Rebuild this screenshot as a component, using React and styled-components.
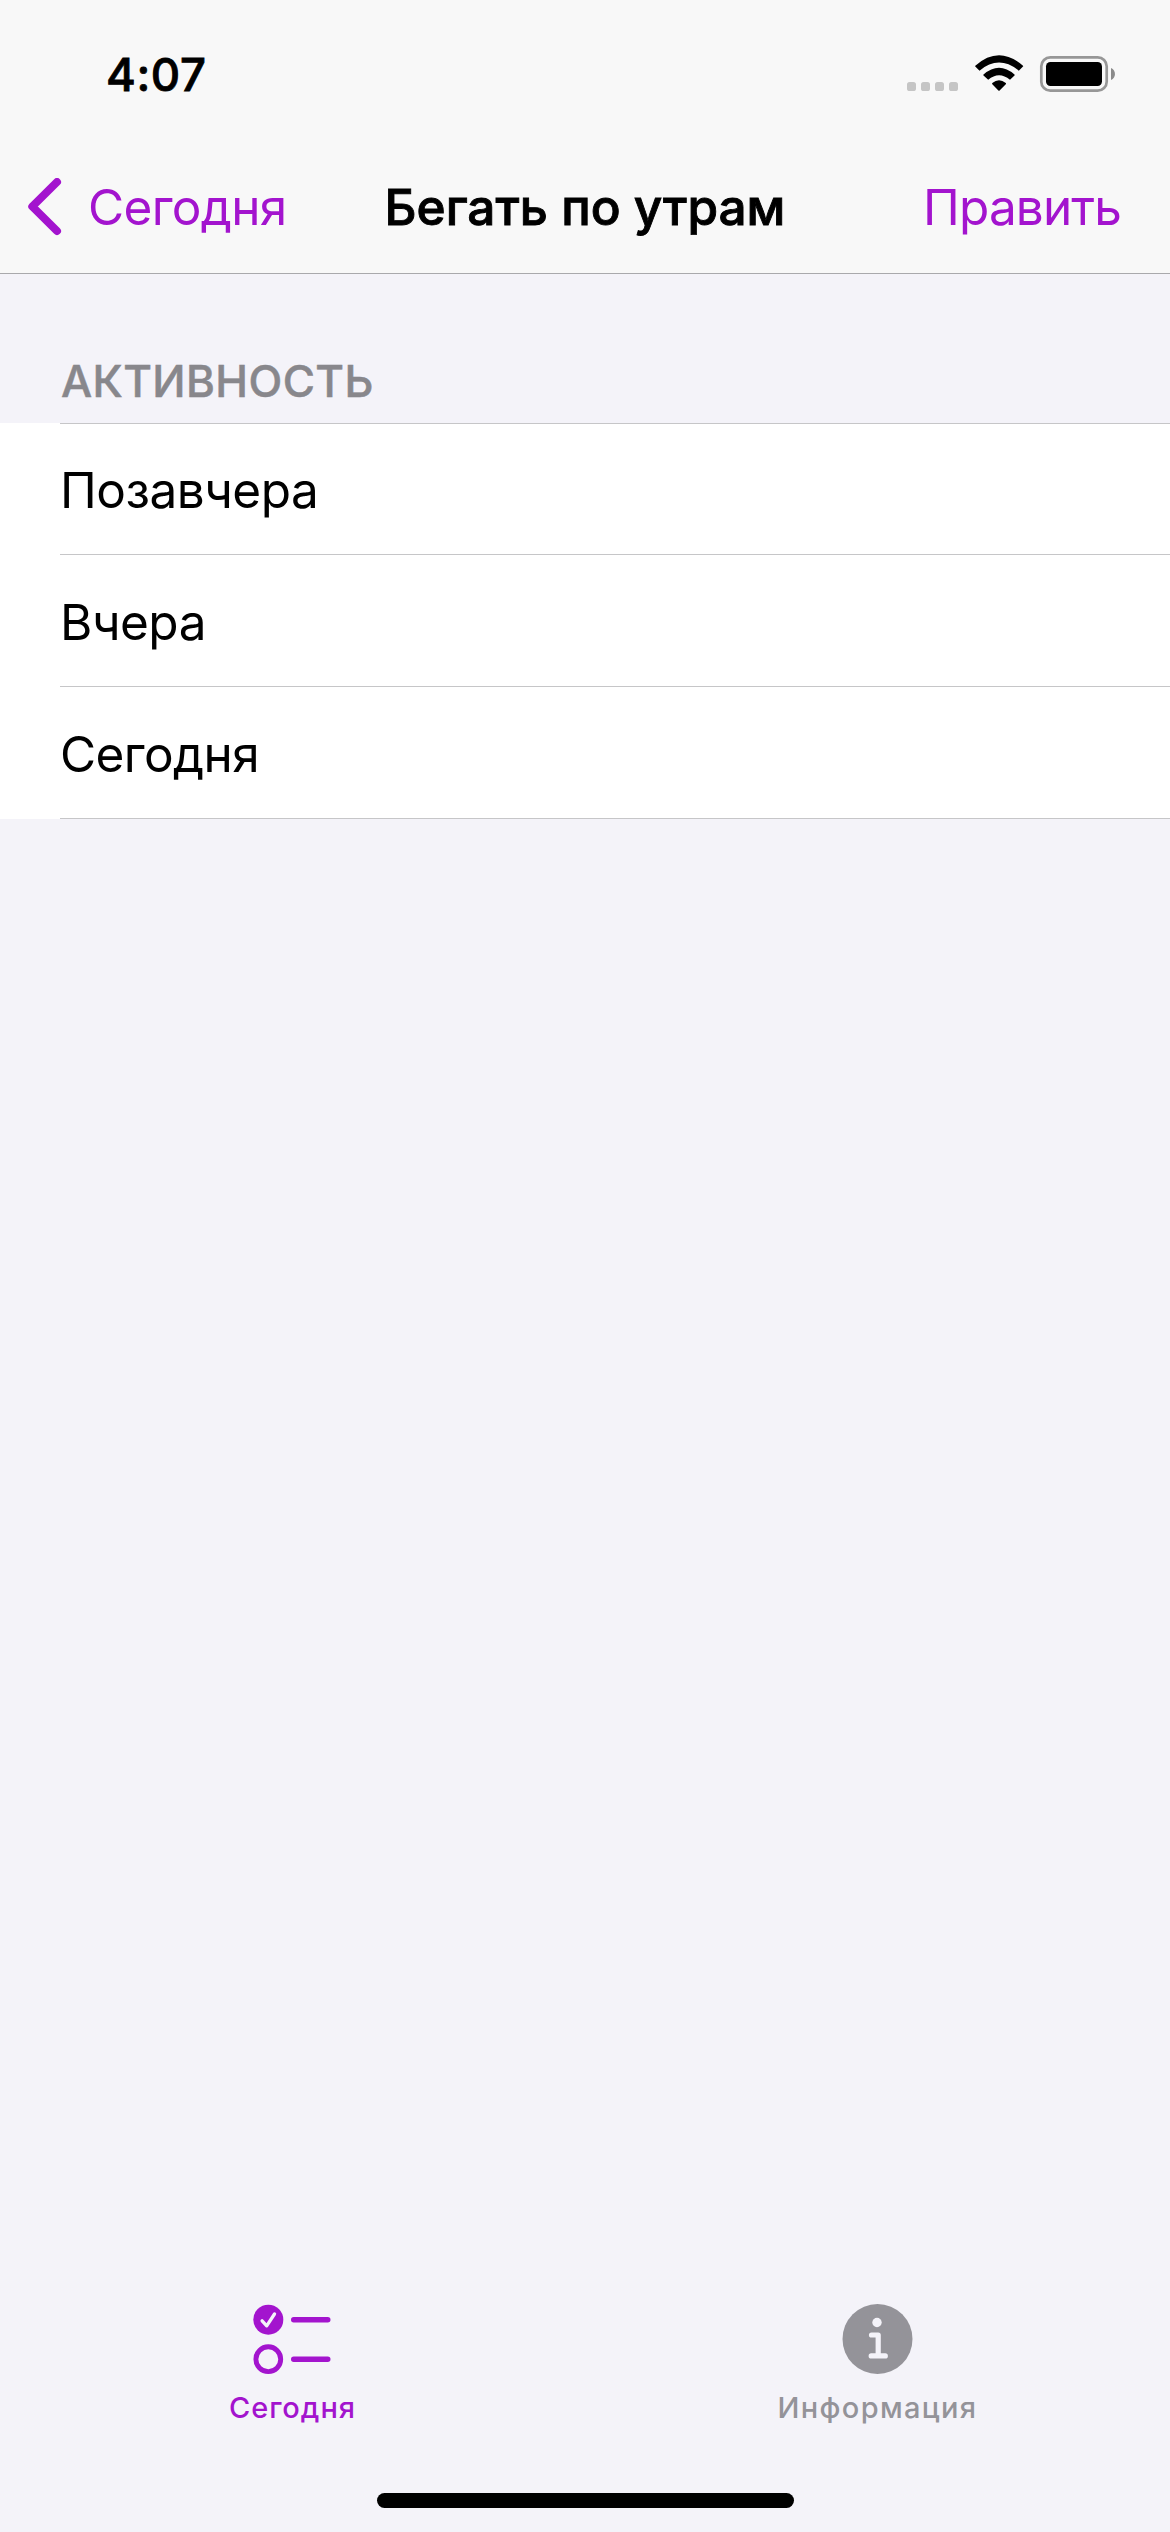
import React from "react";
import styled, { createGlobalStyle } from "styled-components";

const accent = "#a314ce";
const canvas = "#f4f3f9";

const GlobalStyle = createGlobalStyle`
  * { box-sizing: border-box; }
  body { margin: 0; background: ${canvas}; }
`;

const Screen = styled.div`
  display: flex;
  flex-direction: column;
  width: 1170px;
  height: 2532px;
  overflow: hidden;
  background: ${canvas};
  color: #000;
  font-family: Inter, "Noto Sans", sans-serif;
  white-space: nowrap;
`;

const Header = styled.header`
  height: 274px;
  background: #f8f8f8;
  border-bottom: 1px solid #a9a9ac;
`;

const StatusBar = styled.div`
  display: flex;
  justify-content: space-between;
  height: 141px;
  padding: 45px 54px 0 106px;
`;

const Time = styled.div`
  font-size: 45.5px;
  font-weight: 500;
  line-height: 60px;
  letter-spacing: 0.6px;
  -webkit-text-stroke: 0.8px currentColor;
`;

const StatusIcons = styled.svg`
  width: 209px;
  height: 40px;
  margin-top: 8px;
`;

const NavBar = styled.nav`
  display: grid;
  grid-template-columns: minmax(0, 1fr) auto minmax(0, 1fr);
  align-items: center;
  height: 132px;
  padding: 0 28px;
`;

const NavButton = styled.button`
  display: flex;
  align-items: center;
  justify-self: ${(p) => p.$side};
  gap: 26px;
  padding: 0;
  margin-right: ${(p) => (p.$side === "end" ? 21 : 0)}px;
  border: 0;
  background: none;
  color: ${accent};
  font: 400 49.5px/60px Inter, "Noto Sans", sans-serif;
  letter-spacing: ${(p) => p.$tracking}px;
`;

const Title = styled.h1`
  margin: 0;
  font-size: 49.5px;
  font-weight: 500;
  line-height: 60px;
  -webkit-text-stroke: 0.9px currentColor;
`;

const Chevron = styled.svg`
  width: 34px;
  height: 58px;
`;

const Content = styled.main`
  flex: 1;
`;

const SectionTitle = styled.h2`
  height: 149px;
  margin: 0;
  padding: 77px 0 0 61px;
  color: #88878c;
  font-size: 44px;
  font-weight: 500;
  line-height: 60px;
  letter-spacing: 0.4px;
  -webkit-text-stroke: 0.5px currentColor;
`;

const List = styled.ul`
  margin: 0;
  padding: 0 0 0 60px;
  list-style: none;
  background: #fff;
`;

const Row = styled.li`
  height: 132px;
  padding-top: 37px;
  border-bottom: 1px solid #c6c6c8;
  font-size: 49.5px;
  line-height: 60px;
  letter-spacing: ${(p) => p.$tracking}px;

  &:first-child {
    padding-top: 36px;
    border-top: 1px solid #c6c6c8;
  }
`;

const TabBar = styled.footer`
  display: grid;
  grid-template-columns: 1fr 1fr;
  height: 190px;
`;

const Tab = styled.div`
  display: flex;
  flex-direction: column;
  align-items: center;
  color: ${(p) => (p.$active ? accent : "#949399")};
  font-size: 29px;
  font-weight: 500;
  line-height: 36px;
  letter-spacing: ${(p) => p.$tracking}px;
`;

const TabIcon = styled.svg`
  width: 80px;
  height: 72px;
  margin-bottom: 15px;
`;

const HomeArea = styled.div`
  display: flex;
  justify-content: center;
  height: 39px;
`;

const HomeIndicator = styled.div`
  width: 417px;
  height: 15px;
  margin-left: 1px;
  border-radius: 8px;
  background: #000;
`;

const rows = [
  { label: "Позавчера", tracking: -0.5 },
  { label: "Вчера", tracking: -0.5 },
  { label: "Сегодня", tracking: -0.6 },
];

function SystemIcons() {
  return (
    <StatusIcons viewBox="907 53 209 40">
      {[907, 921, 935, 949].map((x) => (
        <rect key={x} x={x} y="82" width="9" height="9" rx="2.6" fill="#c5c5c5" />
      ))}
      <path d="M975.300 65.700 Q999 44.800 1023 65.700 Q1023.400 66.200 1023 66.600 L1018.800 70.700 Q999 54.500 979.500 70.700 L975.300 66.600 Q974.900 66.200 975.300 65.700 Z" />
      <path d="M983.500 74.500 Q999 61 1014.500 74.500 Q1015 75 1014.500 75.500 L1010 79.800 Q999 70.500 988.200 79.800 L983.500 75.500 Q983 75 983.500 74.500 Z" />
      <path d="M992.300 83 Q999 77.500 1005.800 83 Q1006.300 83.600 1005.800 84.200 L999.600 90.400 Q999 91 998.400 90.400 L992.300 84.200 Q991.800 83.600 992.300 83 Z" />
      <rect x="1041.300" y="57.300" width="65.400" height="33.400" rx="9" fill="none" stroke="#979797" strokeWidth="2.700" />
      <rect x="1046" y="62" width="56" height="24" rx="4.500" />
      <path d="M1111 68 C1116.300 70 1116.300 78 1111 80 Z" fill="#8b8b8b" />
    </StatusIcons>
  );
}

function ChecklistIcon() {
  return (
    <TabIcon viewBox="252.500 2303 80 72" fill="none" strokeLinecap="round">
      <circle cx="267.800" cy="2319.700" r="15" fill={accent} />
      <path d="M261.600 2320.800L266.200 2325.800L274 2314" stroke={canvas} strokeWidth="3.300" strokeLinejoin="round" />
      <circle cx="267.800" cy="2359.200" r="12.400" stroke={accent} strokeWidth="4.900" />
      <path d="M293.200 2319.700H327.300M293.200 2359.200H327.300" stroke={accent} strokeWidth="5.400" />
    </TabIcon>
  );
}

function InfoIcon() {
  return (
    <TabIcon viewBox="837.500 2303 80 72" fill="none">
      <circle cx="877" cy="2339" r="35" fill="#949399" />
      <circle cx="876.500" cy="2322.500" r="4.700" fill={canvas} />
      <path d="M871 2335H877.700V2355.700M870.700 2355.900H884.800" stroke={canvas} strokeWidth="5.200" strokeLinecap="round" strokeLinejoin="round" />
    </TabIcon>
  );
}

export default function App() {
  return (
    <>
      <GlobalStyle />
      <Screen>
        <Header>
          <StatusBar>
            <Time>4:07</Time>
            <SystemIcons />
          </StatusBar>
          <NavBar>
            <NavButton $side="start" $tracking={-0.68}>
              <Chevron viewBox="0 0 34 58" fill="none">
                <path d="M29 4L4.300 28.500L29 53" stroke={accent} strokeWidth="8" strokeLinecap="round" strokeLinejoin="round" />
              </Chevron>
              <span>Сегодня</span>
            </NavButton>
            <Title>Бегать по утрам</Title>
            <NavButton $side="end" $tracking={-0.88}>Править</NavButton>
          </NavBar>
        </Header>
        <Content>
          <SectionTitle>АКТИВНОСТЬ</SectionTitle>
          <List>
            {rows.map((row) => (
              <Row key={row.label} $tracking={row.tracking}>{row.label}</Row>
            ))}
          </List>
        </Content>
        <TabBar>
          <Tab $active $tracking={0.95}>
            <ChecklistIcon />
            Сегодня
          </Tab>
          <Tab $tracking={1.34}>
            <InfoIcon />
            Информация
          </Tab>
        </TabBar>
        <HomeArea>
          <HomeIndicator />
        </HomeArea>
      </Screen>
    </>
  );
}
